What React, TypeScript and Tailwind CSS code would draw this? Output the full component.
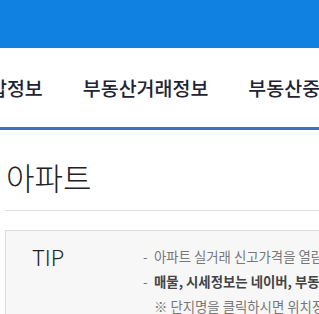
const font = { fontFamily: '"Noto Sans CJK KR", "Noto Sans", sans-serif' };

const navItems = ["가압정보", "부동산거래정보", "부동산중개정보"];

export default function App() {
  return (
    <div className="w-[319px] h-[314px] overflow-hidden bg-white" style={font}>
      <div className="w-[640px]">
        {/* top bar */}
        <div className="h-[48px] bg-[#1081e0]" />

        {/* menu */}
        <nav className="h-[82px] border-b-[3px] border-[#3c71c7] flex items-center">
          <ul className="flex items-center gap-[40px] ml-[-29px] whitespace-nowrap">
            {navItems.map((item) => (
              <li key={item} className="text-[19.5px] leading-[26px] font-medium text-[#1e2433]">
                {item}
              </li>
            ))}
          </ul>
        </nav>

        <div className="pl-[5px]">
          <h1 className="pt-[31px] pb-[18px] pl-[1px] text-[31px] leading-[31px] font-light text-[#222]">
            아파트
          </h1>
          <div className="h-px bg-[#dddddd]" />

          <div className="mt-[19px] border border-[#dddddd] bg-[#f7f7f8] flex pt-[13px] pl-[26px] pb-[10px]">
            <div className="w-[111px] shrink-0 text-[22px] leading-[25px] font-light text-[#222]">TIP</div>
            <ul className="text-[13.4px] leading-[25px] whitespace-nowrap">
              <li className="flex text-[#777]">
                <span className="w-[11px] shrink-0">-</span>
                <span>아파트 실거래 신고가격을 열람할 수 있습니다.</span>
              </li>
              <li className="flex text-[#444] font-bold">
                <span className="w-[11px] shrink-0 font-normal text-[#777]">-</span>
                <span>매물, 시세정보는 네이버, 부동산114 등을 참고하세요.</span>
              </li>
              <li className="flex text-[#777]">
                <span className="w-[11px] shrink-0" />
                <span>※ 단지명을 클릭하시면 위치정보를 확인할 수 있습니다.</span>
              </li>
            </ul>
          </div>
        </div>
      </div>
    </div>
  );
}
